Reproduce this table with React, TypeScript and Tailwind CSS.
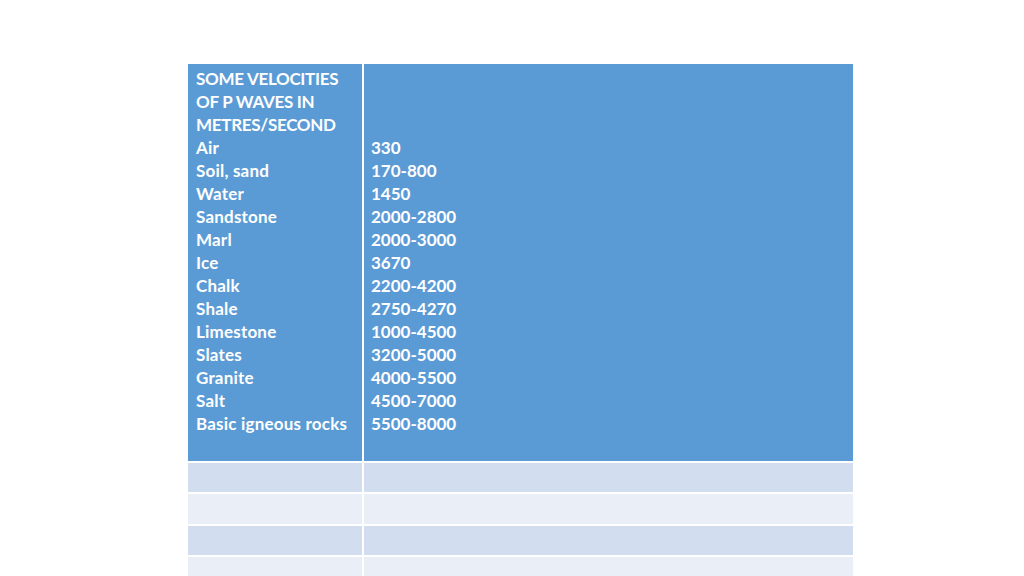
import React from "react";

const names = ["Air","Soil, sand","Water","Sandstone","Marl","Ice","Chalk","Shale","Limestone","Slates","Granite","Salt","Basic igneous rocks"];
const vals = ["330","170-800","1450","2000-2800","2000-3000","3670","2200-4200","2750-4270","1000-4500","3200-5000","4000-5500","4500-7000","5500-8000"];

export default function App() {
  return (
    <div className="w-[1024px] h-[576px] bg-white overflow-hidden relative" style={{ fontFamily: "Lato, 'Open Sans', sans-serif" }}>
      <div className="ml-[188px] mt-[64px] w-[665px] flex flex-col gap-[2px] text-white font-bold text-[17px] leading-[23px]">
        <div className="flex gap-[2px] h-[397px]">
          <div className="w-[174px] bg-[#5b9bd5] pl-[8px] pt-[3px]">
            <div className="tracking-[-0.3px]">SOME VELOCITIES</div>
            <div className="tracking-[-0.3px]">OF P WAVES IN</div>
            <div className="tracking-[-0.3px]">METRES/SECOND</div>
            {names.map((n) => (
              <div key={n} className="whitespace-nowrap tracking-[0.2px]">{n}</div>
            ))}
          </div>
          <div className="flex-1 bg-[#5b9bd5] pl-[7px] pt-[3px]">
            <div>&nbsp;</div>
            <div>&nbsp;</div>
            <div>&nbsp;</div>
            {vals.map((v) => (
              <div key={v}>{v}</div>
            ))}
          </div>
        </div>
        {["#d2deef", "#eaeff7", "#d2deef", "#eaeff7"].map((c, i) => (
          <div key={i} className={i === 1 ? "flex gap-[2px] h-[30px]" : "flex gap-[2px] h-[29px]"}>
            <div className="w-[174px]" style={{ backgroundColor: c }} />
            <div className="flex-1" style={{ backgroundColor: c }} />
          </div>
        ))}
      </div>
    </div>
  );
}
